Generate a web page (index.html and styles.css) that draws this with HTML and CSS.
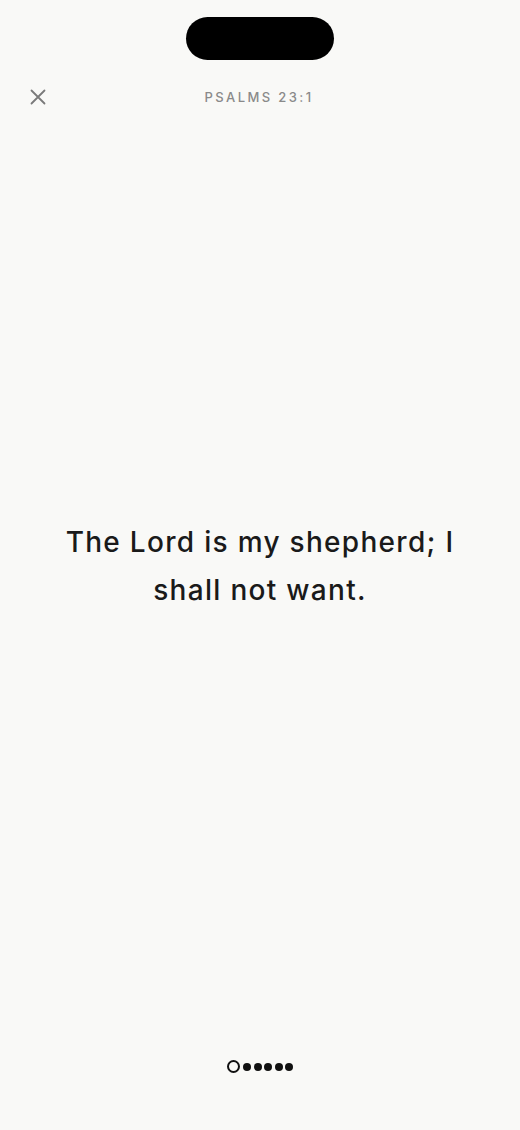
FILE: index.html
```html
<!DOCTYPE html>
<html>
<head>
<meta charset="utf-8">
<link rel="stylesheet" href="styles.css">
</head>
<body>
<div class="screen">
  <div class="island"></div>
  <header class="topbar">
    <button class="close" aria-label="Close">
      <svg width="16" height="16" viewBox="0 0 16 16"><path d="M1.5 1.5 L14.5 14.5 M14.5 1.5 L1.5 14.5" stroke="#7a7a7a" stroke-width="1.8" stroke-linecap="round" fill="none"/></svg>
    </button>
    <div class="ref">PSALMS 23:1</div>
    <div class="spacer"></div>
  </header>
  <main class="verse">
    <p>The Lord is my shepherd; I shall not want.</p>
  </main>
  <footer class="dots">
    <span class="dot current"></span>
    <span class="dot"></span>
    <span class="dot"></span>
    <span class="dot"></span>
    <span class="dot"></span>
    <span class="dot"></span>
  </footer>
</div>
</body>
</html>
```

FILE: styles.css
```css
html, body {
  margin: 0;
  padding: 0;
  background: #f9f9f7;
}
.screen {
  width: 520px;
  height: 1130px;
  display: flex;
  flex-direction: column;
  align-items: center;
  font-family: Inter, "DejaVu Sans", sans-serif;
  color: #1a1a1a;
}
.island {
  margin-top: 17px;
  width: 148px;
  height: 43px;
  border-radius: 22px;
  background: #000;
  flex: none;
}
.topbar {
  width: 100%;
  box-sizing: border-box;
  padding: 0 30px;
  margin-top: 24px;
  height: 25px;
  display: flex;
  align-items: center;
  justify-content: space-between;
}
.close {
  background: none;
  border: 0;
  padding: 0;
  width: 16px;
  height: 16px;
  display: flex;
}
.spacer { width: 16px; }
.ref {
  font-size: 13px;
  letter-spacing: 2.4px;
  color: #8a8a8a;
  font-weight: 500;
  margin-right: 2px;
}
.verse {
  flex: 1;
  display: flex;
  align-items: center;
  justify-content: center;
  padding: 0 50px 38px;
}
.verse p {
  margin: 0;
  text-align: center;
  font-size: 28px;
  line-height: 48px;
  font-weight: 500;
  letter-spacing: 1.3px;
}
.dots {
  display: flex;
  align-items: center;
  gap: 2.5px;
  margin-bottom: 57px;
}
.dot {
  width: 8px;
  height: 8px;
  border-radius: 50%;
  background: #111;
}
.dot.current {
  width: 9px;
  height: 9px;
  background: transparent;
  border: 2px solid #111;
  margin-right: 1px;
}
```
